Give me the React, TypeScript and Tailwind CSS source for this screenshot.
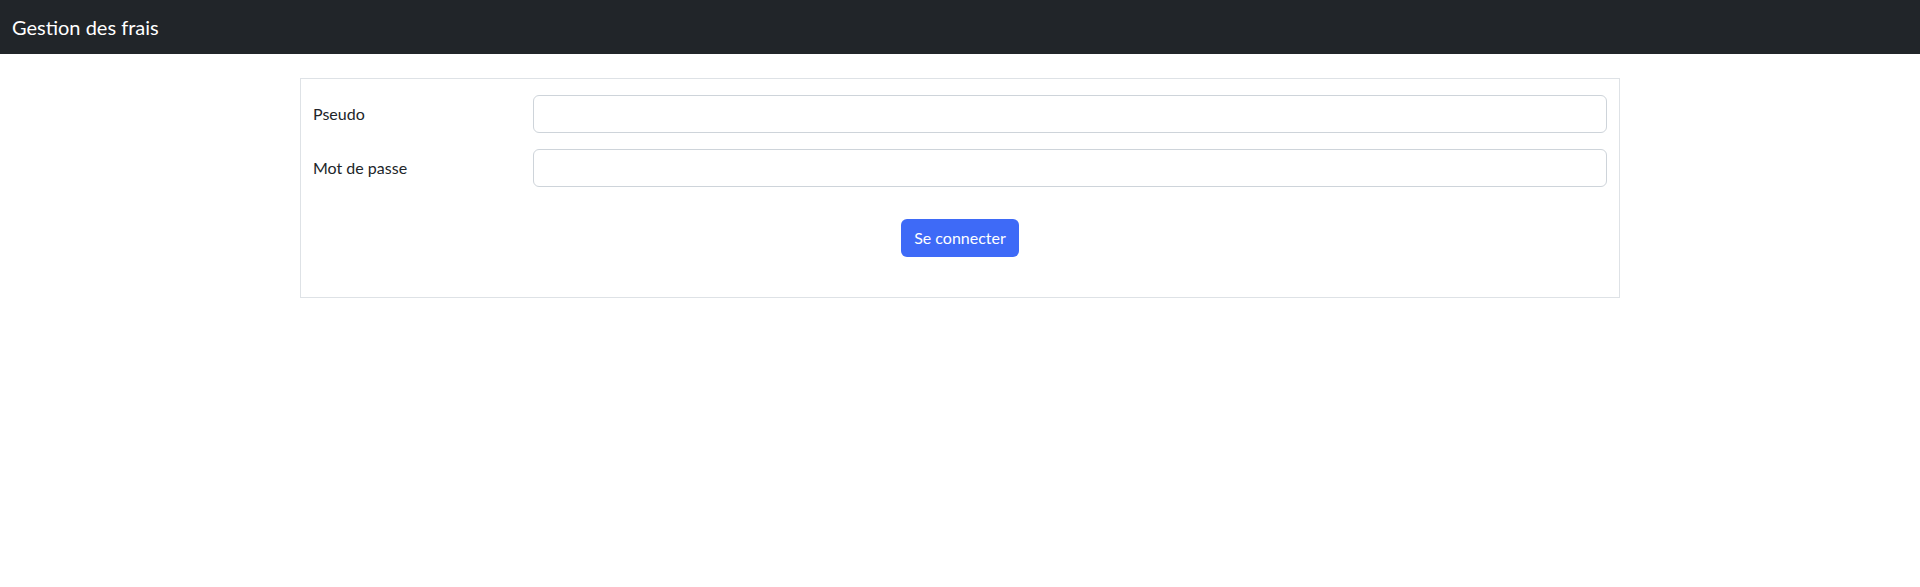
export default function App() {
  return (
    <div className="min-h-screen bg-white font-['Segoe_UI','Lato','Noto_Sans',sans-serif] text-[#212529]">
      <nav className="flex h-[54px] items-center bg-[#212529] px-3">
        <span className="text-[20px] text-white">Gestion des frais</span>
      </nav>

      <div className="mx-auto mt-6 w-[1320px]">
        <form className="flex flex-col border border-[#dee2e6] px-3 pt-4 pb-10">
          <div className="mb-4 flex items-center">
            <label className="w-[220px] text-base">Pseudo</label>
            <input
              type="text"
              className="h-[38px] flex-1 rounded-md border border-[#ced4da] px-3 outline-none"
            />
          </div>
          <div className="flex items-center">
            <label className="w-[220px] text-base">Mot de passe</label>
            <input
              type="password"
              className="h-[38px] flex-1 rounded-md border border-[#ced4da] px-3 outline-none"
            />
          </div>
          <div className="mt-8 flex justify-center">
            <button
              type="button"
              className="h-[38px] rounded-md bg-[#3e6af7] px-[13px] text-base text-white"
            >
              Se connecter
            </button>
          </div>
        </form>
      </div>
    </div>
  );
}
